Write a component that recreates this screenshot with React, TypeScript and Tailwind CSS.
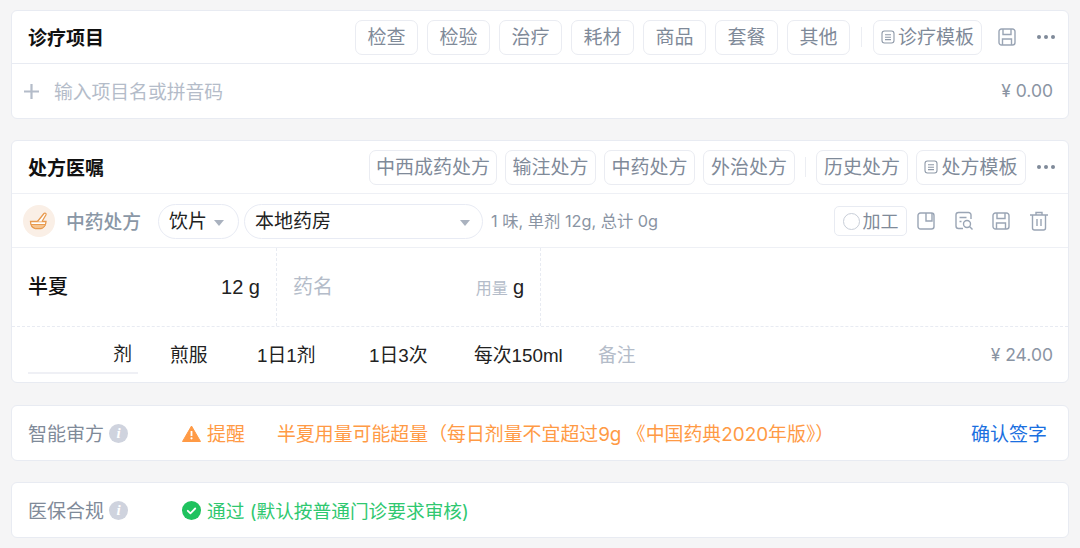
import React from "react";

const sans = "font-['Inter','Noto_Sans_CJK_SC',sans-serif]";

function Tag({ children, w }: { children: React.ReactNode; w: string }) {
  return (
    <div className={`h-[35px] ${w} pt-[3px] flex items-center justify-center shrink-0 rounded-[7px] border border-[#eaecf2] bg-white text-[19px] text-[#7f8a99]`}>
      {children}
    </div>
  );
}

function NoteIcon() {
  return (
    <svg width="14" height="14" viewBox="0 0 14 14" fill="none" stroke="#8e99a8" strokeWidth="1.100" className="shrink-0 mb-[3px]">
      <rect x="1" y="1" width="12" height="12" rx="2.500" />
      <path d="M4 4.800h6M4 7.200h6M4 9.600h6" />
    </svg>
  );
}

function SaveIcon({ c = "#9aa5b5" }: { c?: string }) {
  return (
    <svg width="18" height="18" viewBox="0 0 18 18" fill="none" stroke={c} strokeWidth="1.400" className="shrink-0">
      <path d="M3.500 1h11A2.500 2.500 0 0 1 17 3.500v11a2.500 2.500 0 0 1-2.500 2.500h-11A2.500 2.500 0 0 1 1 14.500v-11A2.500 2.500 0 0 1 3.500 1z" />
      <path d="M5 1v5.500h8V1M4.500 17v-6h9v6" />
    </svg>
  );
}

function Dots() {
  return (
    <div className="flex items-center gap-[3px] shrink-0">
      <span className="w-[4px] h-[4px] rounded-full bg-[#7f8a99]" />
      <span className="w-[4px] h-[4px] rounded-full bg-[#7f8a99]" />
      <span className="w-[4px] h-[4px] rounded-full bg-[#7f8a99]" />
    </div>
  );
}

function Caret() {
  return <span className="w-0 h-0 border-x-[5px] border-x-transparent border-t-[6px] border-t-[#aab2bf]" />;
}

function Info() {
  return (
    <span className="w-[19px] h-[19px] rounded-full bg-[#cfd3de] flex items-center justify-center text-white text-[15px] font-bold italic font-['Liberation_Serif',serif] shrink-0">
      i
    </span>
  );
}

function Bowl() {
  return (
    <div className="w-[32px] h-[32px] rounded-full bg-[#faefe6] flex items-center justify-center shrink-0">
      <svg width="20" height="20" viewBox="0 0 20 20" fill="none">
        <path d="M1.500 10.500h15.500c0 4-2.800 6.500-5 7H6.500c-2.500-.6-5-3-5-7z" fill="#fff" stroke="#e89a4f" strokeWidth="1.300" />
        <path d="M2 13.500h14.500c-.8 2-2.500 3.500-4.500 4H6.500c-2-.5-3.700-2-4.500-4z" fill="#f6c48f" stroke="#e89a4f" strokeWidth="1" />
        <path d="M8.500 10.500 15 2.500c.8-1 2.500.1 2 1.300L13 10.500" fill="#fff" stroke="#e89a4f" strokeWidth="1.300" />
      </svg>
    </div>
  );
}

export default function App() {
  return (
    <div className={`w-[1080px] h-[548px] overflow-hidden bg-[#f5f5f6] px-[11px] pt-[10px] flex flex-col ${sans}`}>
      {/* 诊疗项目 */}
      <section className="h-[109px] shrink-0 bg-white rounded-[6px] border border-[#e8ebf2] flex flex-col">
        <div className="h-[53px] shrink-0 border-b border-[#e8ebf2] flex items-center pl-[16px] pr-[13px]">
          <h2 className="pt-[4px] text-[19px] font-bold text-[#111] flex-1">诊疗项目</h2>
          <div className="flex items-center gap-[9px]">
            {["检查", "检验", "治疗", "耗材", "商品", "套餐", "其他"].map((t) => (
              <Tag key={t} w="w-[63px]">{t}</Tag>
            ))}
          </div>
          <span className="w-px h-[20px] bg-[#eceef3] ml-[11px] mr-[11px]" />
          <Tag w="w-[109px] gap-[3px]"><NoteIcon />诊疗模板</Tag>
          <span className="ml-[16px]"><SaveIcon /></span>
          <span className="ml-[21px]"><Dots /></span>
        </div>
        <div className="flex-1 flex items-center pl-[12px] pr-[15px]">
          <svg width="15" height="15" viewBox="0 0 15 15" stroke="#b4bcc9" strokeWidth="2.200" className="shrink-0">
            <path d="M7.500 0v15M0 7.500h15" />
          </svg>
          <span className="pt-[4px] ml-[15px] text-[18.800px] text-[#b4bcc9] flex-1">输入项目名或拼音码</span>
          <span className="text-[17.500px] text-[#8a94a3]">¥ 0.00</span>
        </div>
      </section>

      {/* 处方医嘱 */}
      <section className="mt-[21px] h-[243px] shrink-0 bg-white rounded-[6px] border border-[#e8ebf2] flex flex-col">
        <div className="h-[53px] shrink-0 border-b border-[#eef0f5] flex items-center pl-[16px] pr-[13px]">
          <h2 className="pt-[4px] text-[19px] font-bold text-[#111] flex-1">处方医嘱</h2>
          <div className="flex items-center gap-[8px]">
            <Tag w="w-[128px]">中西成药处方</Tag>
            <Tag w="w-[91px]">输注处方</Tag>
            <Tag w="w-[91px]">中药处方</Tag>
            <Tag w="w-[92px]">外治处方</Tag>
          </div>
          <span className="w-px h-[20px] bg-[#eceef3] ml-[10px] mr-[10px]" />
          <Tag w="w-[92px]">历史处方</Tag>
          <Tag w="w-[110px] gap-[3px] ml-[8px]"><NoteIcon />处方模板</Tag>
          <span className="ml-[11px]"><Dots /></span>
        </div>
        <div className="h-[54px] shrink-0 border-b border-[#eef0f5] flex items-center pl-[11px] pr-[20px] pt-[1px]">
          <Bowl />
          <span className="pt-[4px] ml-[11px] w-[75px] whitespace-nowrap text-[18.800px] font-medium text-[#8a97a6]">中药处方</span>
          <div className="ml-[17px] w-[81px] h-[35px] pt-[3px] rounded-full border border-[#e8ebf4] flex items-center pl-[10px] pr-[14px] justify-between text-[19px] text-[#222]">
            饮片<Caret />
          </div>
          <div className="ml-[5px] w-[239px] h-[35px] pt-[3px] rounded-full border border-[#e8ebf4] flex items-center pl-[10px] pr-[12px] justify-between text-[19px] text-[#222]">
            本地药房<Caret />
          </div>
          <span className="ml-[8px] text-[16.300px] text-[#8a94a3] flex-1">1 味, 单剂 12g, 总计 0g</span>
          <div className="w-[73px] h-[30px] rounded-[5px] border border-[#e8ebf2] flex items-center justify-center gap-[3px] text-[18px] text-[#7f8a99]">
            <span className="w-[17px] h-[17px] rounded-full border border-[#c8ced8]" />加工
          </div>
          <svg width="18" height="18" viewBox="0 0 18 18" fill="none" stroke="#9aa5b5" strokeWidth="1.400" className="ml-[10px] shrink-0">
            <rect x="1" y="1" width="16" height="16" rx="2.500" />
            <path d="M9 1v8h6V1" />
          </svg>
          <svg width="20" height="20" viewBox="0 0 20 20" fill="none" stroke="#9aa5b5" strokeWidth="1.400" className="ml-[19px] shrink-0">
            <path d="M17 8V4a2.500 2.500 0 0 0-2.500-2.500h-10A2.500 2.500 0 0 0 2 4v11a2.500 2.500 0 0 0 2.500 2.500H9" />
            <path d="M5.500 6.500h7M5.500 10.500h2" />
            <circle cx="13" cy="13" r="3.500" />
            <path d="m15.500 15.500 3 3" />
          </svg>
          <span className="ml-[18px]"><SaveIcon /></span>
          <svg width="18" height="20" viewBox="0 0 18 20" fill="none" stroke="#9aa5b5" strokeWidth="1.400" className="ml-[20px] shrink-0">
            <path d="M0 4h18M6 4V1.500h6V4M2.500 4v13a2 2 0 0 0 2 2h9a2 2 0 0 0 2-2V4M7 8v7M11 8v7" />
          </svg>
        </div>
        <div className="h-[79px] shrink-0 border-b border-dashed border-[#e8ebf2] flex">
          <div className="w-[265px] border-r border-dashed border-[#e8ebf2] flex items-center pl-[16px] pr-[16px] justify-between">
            <span className="text-[20px] font-medium text-[#111]">半夏</span>
            <span className="text-[20px] text-[#222] font-['Liberation_Sans','Noto_Sans_CJK_SC',sans-serif]">12 g</span>
          </div>
          <div className="w-[264px] border-r border-dashed border-[#e8ebf2] flex items-center pl-[16px] pr-[16px] justify-between">
            <span className="text-[20px] text-[#b4bcc9]">药名</span>
            <span className="flex items-baseline gap-[5px] font-['Liberation_Sans','Noto_Sans_CJK_SC',sans-serif]">
              <span className="text-[16px] text-[#b4bcc9]">用量</span>
              <span className="text-[20px] text-[#222]">g</span>
            </span>
          </div>
        </div>
        <div className="flex-1 flex items-center pl-[16px] pr-[15px] text-[18.800px] text-[#222] font-['Liberation_Sans','Noto_Sans_CJK_SC',sans-serif]">
          <div className="w-[110px] h-[38px] mt-[1px] pt-[2px] border-b-2 border-[#eff0f5] flex items-center justify-end pr-[6px]">剂</div>
          <span className="pt-[4px] ml-[32px] w-[87px]">煎服</span>
          <span className="pt-[4px] w-[112px]">1日1剂</span>
          <span className="pt-[4px] w-[105px]">1日3次</span>
          <span className="pt-[4px] w-[124px]">每次150ml</span>
          <span className="pt-[4px] text-[#b4bcc9] text-[18.800px] flex-1">备注</span>
          <span className={`pt-[1px] text-[17.500px] text-[#8a94a3] ${sans}`}>¥ 24.00</span>
        </div>
      </section>

      {/* 智能审方 */}
      <section className="mt-[22px] h-[56px] shrink-0 bg-white rounded-[6px] border border-[#e8ebf2] flex items-center pl-[16px] pr-[21px]">
        <span className="pt-[4px] text-[19px] text-[#7f8a99]">智能审方</span>
        <span className="ml-[5px]"><Info /></span>
        <svg width="19" height="17" viewBox="0 0 19 17" className="ml-[54px] shrink-0">
          <path d="M9.500 1 18.500 16.500H.5z" fill="#ff9a45" stroke="#ff9a45" strokeLinejoin="round" />
          <path d="M9.500 6v5" stroke="#fff" strokeWidth="1.800" />
          <circle cx="9.500" cy="13.300" r="1.100" fill="#fff" />
        </svg>
        <span className="pt-[4px] ml-[6px] w-[70px] text-[19px] text-[#ff9a45]">提醒</span>
        <span className="pt-[4px] text-[18.900px] text-[#ff9a45] flex-1">半夏用量可能超量（每日剂量不宜超过9g 《中国药典2020年版》）</span>
        <span className="pt-[4px] text-[19px] text-[#1a6fe0]">确认签字</span>
      </section>

      {/* 医保合规 */}
      <section className="mt-[21px] h-[56px] shrink-0 bg-white rounded-[6px] border border-[#e8ebf2] flex items-center pl-[16px] pr-[21px]">
        <span className="pt-[4px] text-[19px] text-[#7f8a99]">医保合规</span>
        <span className="ml-[5px]"><Info /></span>
        <svg width="19" height="19" viewBox="0 0 19 19" className="ml-[54px] shrink-0">
          <circle cx="9.500" cy="9.500" r="9.500" fill="#1fc25e" />
          <path d="m5.800 9.800 2.600 2.500 4.800-4.800" fill="none" stroke="#fff" strokeWidth="1.800" strokeLinecap="round" strokeLinejoin="round" />
        </svg>
        <span className="pt-[4px] ml-[6px] text-[18.700px] text-[#2fc870]">通过 (默认按普通门诊要求审核)</span>
      </section>
    </div>
  );
}
